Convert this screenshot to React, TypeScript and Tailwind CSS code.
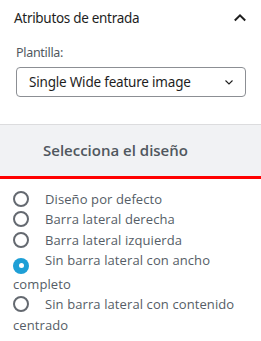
import React from "react"

const options = [
  { label: "Diseño por defecto", checked: false },
  { label: "Barra lateral derecha", checked: false },
  { label: "Barra lateral izquierda", checked: false },
  { label: "Sin barra lateral con ancho completo", checked: true },
  { label: "Sin barra lateral con contenido centrado", checked: false },
]

function Radio({ checked }: { checked: boolean }) {
  return checked ? (
    <span className="inline-flex items-center justify-center w-[16px] h-[16px] rounded-full bg-[#1e9fd6] align-[-3px] mr-[16px]">
      <span className="w-[5px] h-[5px] rounded-full bg-white" />
    </span>
  ) : (
    <span className="inline-block w-[16px] h-[16px] rounded-full border-2 border-[#646970] align-[-3px] mr-[16px]" />
  )
}

export default function App() {
  return (
    <div className="w-[261px] h-[341px] bg-white overflow-hidden font-['Open_Sans',sans-serif]">
      {/* Panel header */}
      <div className="flex items-center justify-between pl-[14px] pr-[14px] pt-[4px] h-[32px]">
        <span className="text-[13.5px] tracking-[-0.3px] text-[#1e1e1e] font-['Noto_Sans',sans-serif]">Atributos de entrada</span>
        <svg width="14" height="14" viewBox="0 0 14 14">
          <path d="M1.8 9.5L7 4.3l5.2 5.2" fill="none" stroke="#1e1e1e" strokeWidth="2" />
        </svg>
      </div>

      <div className="pl-[16px] pr-[15px] pt-[12px]">
        <div className="text-[12.5px] tracking-[-0.3px] text-[#50575e] leading-[18px] font-['Noto_Sans',sans-serif]">Plantilla:</div>
        <div className="mt-[5px] h-[30px] flex items-center justify-between border border-[#8c8f94] rounded-[4px] pl-[12px] pr-[10px]">
          <span className="text-[13.5px] tracking-[-0.2px] text-[#1e1e1e] font-['Noto_Sans',sans-serif]">Single Wide feature image</span>
          <svg width="12" height="12" viewBox="0 0 24 24">
            <path d="M5 9l7 7 7-7" fill="none" stroke="#1e1e1e" strokeWidth="2.2" />
          </svg>
        </div>
      </div>

      {/* Layout selector */}
      <div className="mt-[27px] border-t border-[#dcdcde] bg-[#f1f2f4] h-[55px] border-b-[3px] border-b-[#ff0000] flex items-center pl-[43px]">
        <span className="text-[15px] font-semibold text-[#50575e]">Selecciona el diseño</span>
      </div>

      <div className="px-[13px] pt-[10px] pr-[14px] text-[13px] leading-[20.4px] text-[#555d66] tracking-[0.1px]">
        {options.map((o) => (
          <div key={o.label}>
            <Radio checked={o.checked} />
            {o.label}
          </div>
        ))}
      </div>
    </div>
  )
}
